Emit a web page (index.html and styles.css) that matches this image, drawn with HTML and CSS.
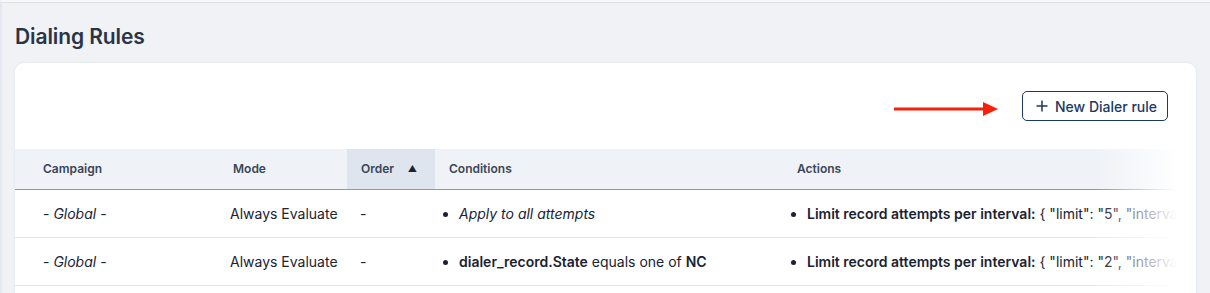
FILE: index.html
```html
<!DOCTYPE html>
<html>
<head>
<meta charset="utf-8">
<link rel="stylesheet" href="styles.css">
</head>
<body>
<div class="frame">
  <h1 class="title">Dialing Rules</h1>
  <div class="card">
    <div class="toolbar">
      <svg class="arrow" width="106" height="16" viewBox="0 0 106 16">
        <line x1="1" y1="8" x2="92" y2="8" stroke="#f5210a" stroke-width="3"/>
        <polygon points="90,1 105,8 90,15" fill="#f5210a"/>
      </svg>
      <button class="btn">
        <svg class="plus" width="12" height="12" viewBox="0 0 12 12">
          <path d="M6 0.5V11.5M0.5 6H11.5" stroke="#1c3961" stroke-width="1.5" fill="none"/>
        </svg>
        <span>New Dialer rule</span>
      </button>
    </div>
    <div class="table-wrap">
      <table class="rules">
        <thead>
          <tr>
            <th class="c-campaign">Campaign</th>
            <th class="c-mode">Mode</th>
            <th class="c-order sorted"><span class="th-inner">Order <span class="sort">&#9650;</span></span></th>
            <th class="c-cond">Conditions</th>
            <th class="c-act">Actions</th>
          </tr>
        </thead>
        <tbody>
          <tr>
            <td class="c-campaign">- <i>Global</i> -</td>
            <td class="c-mode">Always Evaluate</td>
            <td class="c-order">-</td>
            <td class="c-cond"><ul><li><i>Apply to all attempts</i></li></ul></td>
            <td class="c-act"><ul><li><b>Limit record attempts per interval:</b> { "limit": "5", "interval": "1 day" }</li></ul></td>
          </tr>
          <tr>
            <td class="c-campaign">- <i>Global</i> -</td>
            <td class="c-mode">Always Evaluate</td>
            <td class="c-order">-</td>
            <td class="c-cond"><ul><li><b>dialer_record.State</b> equals one of <b>NC</b></li></ul></td>
            <td class="c-act"><ul><li><b>Limit record attempts per interval:</b> { "limit": "2", "interval": "1 day" }</li></ul></td>
          </tr>
        </tbody>
      </table>
      <div class="fade"></div>
    </div>
  </div>
</div>
</body>
</html>
```

FILE: styles.css
```css
* { box-sizing: border-box; }
html, body { margin: 0; padding: 0; }
body {
  background: #f0f2f6;
  font-family: Inter, "Noto Sans", sans-serif;
  color: #1b2230;
  height: 293px;
  overflow: hidden;
}
.frame {
  height: 100%;
  border-top: 2px solid #f7f8fa;
  border-left: 2px solid #e4e9f1;
  box-shadow: inset 0 1px 0 #dde1e7;
  padding: 0 14px 0 13px;
}
.title {
  margin: 0;
  padding-top: 22px;
  height: 61px;
  font-size: 21px;
  line-height: 26px;
  font-weight: 600;
  color: #2a3446;
  letter-spacing: -0.1px;
}
.card {
  background: #fff;
  border-radius: 9px;
  box-shadow: 0 0 3px rgba(30, 40, 60, 0.08);
  width: 1181px;
  height: 260px;
}
.toolbar {
  height: 86px;
  display: flex;
  align-items: flex-start;
  justify-content: flex-end;
  padding: 28px 28px 0 0;
}
.arrow {
  margin-top: 10px;
  margin-right: 23px;
  display: block;
}
.btn {
  height: 30px;
  width: 146px;
  border: 1px solid #1c3961;
  border-radius: 5px;
  background: #fff;
  color: #1c3961;
  font-family: Inter, "Noto Sans", sans-serif;
  font-size: 14px;
  font-weight: 500;
  display: flex;
  align-items: center;
  gap: 7px;
  padding: 0 0 0 13px;
}
.plus { display: block; }
.table-wrap {
  position: relative;
  margin-right: 19px;
  overflow: hidden;
}
.rules {
  border-collapse: collapse;
  table-layout: fixed;
  width: 1400px;
  font-size: 14px;
}
.rules th {
  background: #eff2f7;
  height: 40px;
  border-bottom: 1px solid #8999b2;
  text-align: left;
  font-size: 12px;
  font-weight: 600;
  color: #3a4557;
  padding: 0 14px;
  white-space: nowrap;
}
.rules th.sorted { background: #dfe5ee; }
.th-inner { display: flex; align-items: center; justify-content: space-between; padding-right: 4px; }
.sort { font-size: 9px; color: #1b2230; }
.rules td {
  height: 48px;
  border-bottom: 1px solid #e3e8f0;
  padding: 0 14px;
  white-space: nowrap;
  vertical-align: middle;
  color: #1b2230;
}
.rules td.c-mode { padding-left: 11px; }
.rules td.c-order { padding-left: 13px; }
.rules b { font-weight: 600; }
.c-campaign { width: 204px; }
.rules th.c-campaign, .rules td.c-campaign { padding-left: 28px; }
.c-mode { width: 128px; }
.c-order { width: 88px; }
.c-cond { width: 348px; }
.c-act { width: 632px; }
.rules ul { margin: 0; padding-left: 10px; }
.rules li { padding-left: 0; }
.fade {
  position: absolute;
  top: 0;
  right: 0;
  bottom: 0;
  width: 80px;
  background: linear-gradient(to right, rgba(255,255,255,0), #fff);
  pointer-events: none;
}
```
